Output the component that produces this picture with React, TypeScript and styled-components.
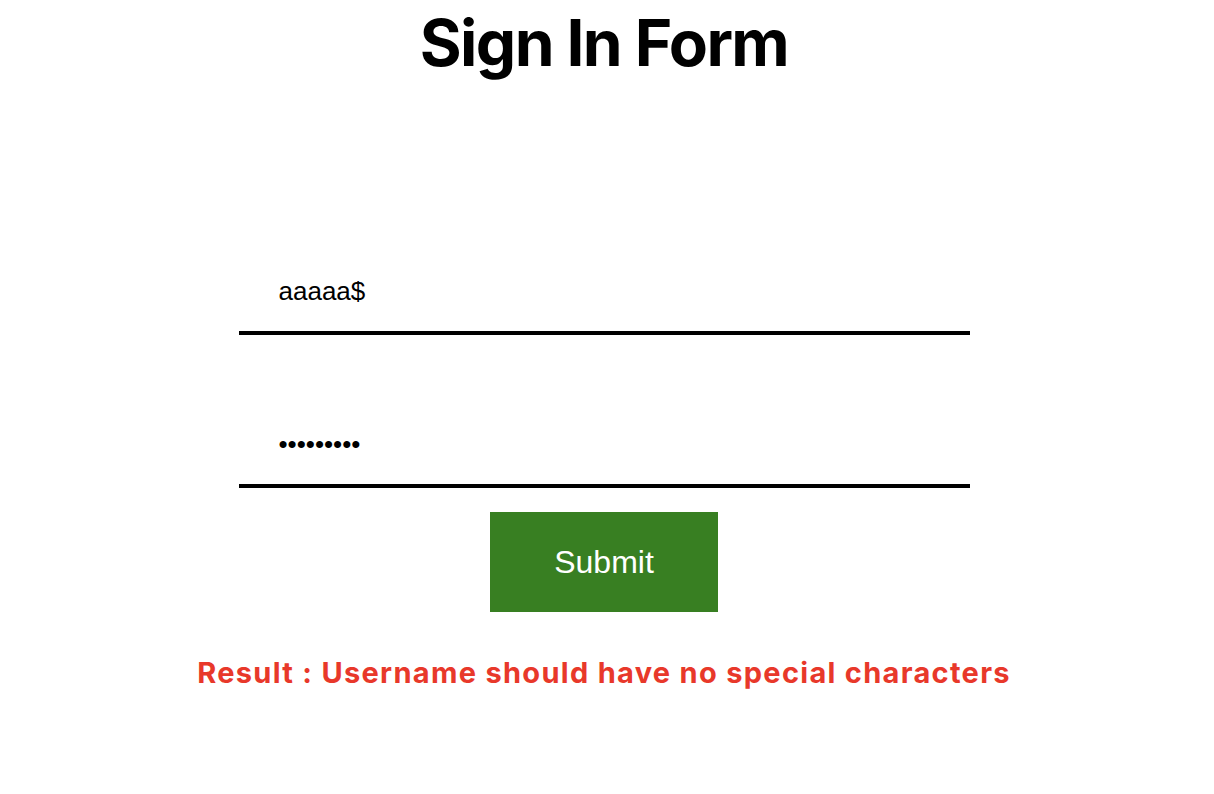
import React, { useState } from "react";
import styled, { createGlobalStyle } from "styled-components";

const GlobalStyle = createGlobalStyle`
  html, body {
    margin: 0;
    padding: 0;
    background: #ffffff;
  }
  body {
    font-family: "Liberation Sans", Arial, sans-serif;
  }
`;

const Page = styled.div`
  display: flex;
  flex-direction: column;
  align-items: center;
  width: 1208px;
`;

const Title = styled.h1`
  margin: 0;
  padding-top: 4px;
  font-family: Inter, "Noto Sans", sans-serif;
  font-weight: 700;
  font-size: 64px;
  line-height: 78px;
  letter-spacing: -1.6px;
  color: #000000;
`;

const Form = styled.form`
  display: flex;
  flex-direction: column;
  align-items: center;
  margin-top: 188px;
`;

const Field = styled.input`
  box-sizing: border-box;
  width: 731px;
  height: 65px;
  margin: 0;
  padding: 6px 40px 25px;
  border: none;
  border-bottom: 4px solid #000000;
  outline: none;
  background: transparent;
  font-family: "Liberation Sans", Arial, sans-serif;
  font-size: 26px;
  line-height: 30px;
  color: #000000;

  & + & {
    margin-top: 88px;
  }
`;

const SubmitButton = styled.button`
  margin-top: 24px;
  width: 228px;
  height: 100px;
  border: none;
  background: #387f22;
  color: #ffffff;
  font-family: "Liberation Sans", Arial, sans-serif;
  font-size: 32px;
  cursor: pointer;
`;

const Result = styled.p`
  margin: 44px 0 0;
  font-family: Inter, "Noto Sans", sans-serif;
  font-weight: 700;
  font-size: 29px;
  line-height: 34px;
  letter-spacing: 1.3px;
  color: #e8382a;
`;

export default function App() {
  const [username, setUsername] = useState("aaaaa$");
  const [password, setPassword] = useState("123456789");
  return (
    <Page>
      <GlobalStyle />
      <Title>Sign In Form</Title>
      <Form onSubmit={(e) => e.preventDefault()}>
        <Field
          type="text"
          value={username}
          onChange={(e) => setUsername(e.target.value)}
        />
        <Field
          type="password"
          value={password}
          onChange={(e) => setPassword(e.target.value)}
        />
        <SubmitButton type="submit">Submit</SubmitButton>
      </Form>
      <Result>Result : Username should have no special characters</Result>
    </Page>
  );
}
